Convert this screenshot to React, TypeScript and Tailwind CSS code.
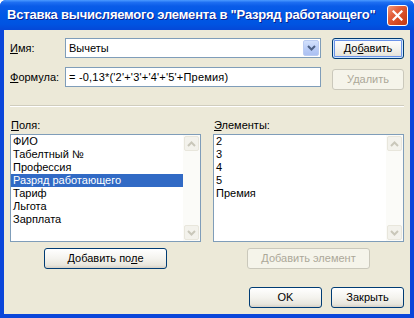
import React from "react";

function Chevron({ dir, color }: { dir: "up" | "down"; color: string }) {
  return (
    <svg width="9" height="6" viewBox="0 0 9 6">
      {dir === "up" ? (
        <path d="M1 5 L4.5 1.5 L8 5" fill="none" stroke={color} strokeWidth="2" />
      ) : (
        <path d="M1 1 L4.5 4.5 L8 1" fill="none" stroke={color} strokeWidth="2" />
      )}
    </svg>
  );
}

function ScrollBtn({ dir }: { dir: "up" | "down" }) {
  return (
    <div className="w-[15px] h-[15px] rounded-[2px] border border-[#E8E6DC] bg-[#F3F2EC] flex items-center justify-center">
      <Chevron dir={dir} color="#C9C7BA" />
    </div>
  );
}

function ListBox({ items, selected, width }: { items: string[]; selected?: number; width: string }) {
  return (
    <div className={`${width} h-[108px] border border-[#7F9DB9] bg-white flex`}>
      <div className="flex-1 flex flex-col pt-[0px]">
        {items.map((it, i) => (
          <div
            key={i}
            className={`h-[13px] leading-[13px] pl-[2px] whitespace-nowrap ${
              i === selected ? "bg-[#316AC5] text-white" : "text-black"
            }`}
          >
            {it}
          </div>
        ))}
      </div>
      <div className="w-[17px] bg-[#FBFBF8] flex flex-col justify-between py-[1px] pl-[1px]">
        <ScrollBtn dir="up" />
        <ScrollBtn dir="down" />
      </div>
    </div>
  );
}

function Btn({
  children,
  width,
  disabled,
  isDefault,
  extra,
}: {
  children: React.ReactNode;
  width: string;
  disabled?: boolean;
  isDefault?: boolean;
  extra?: string;
}) {
  if (disabled) {
    return (
      <div
        className={`${width} h-[21px] rounded-[3px] border border-[#CAC8BB] bg-[#F5F4EA] text-[#ACA899] flex items-center justify-center ${extra ?? ""}`}
      >
        {children}
      </div>
    );
  }
  return (
    <div
      className={`${width} h-[21px] rounded-[3px] border border-[#003C74] bg-[linear-gradient(180deg,#FFFFFF_0%,#F4F3EE_50%,#E8E6DD_85%,#D6D0C5_100%)] text-black flex items-center justify-center ${
        isDefault ? "shadow-[inset_0_0_0_1px_#CEE7FF,inset_0_0_0_2px_#6B93E8]" : ""
      } ${extra ?? ""}`}
    >
      {children}
    </div>
  );
}

export default function App() {
  return (
    <div className="w-[414px] h-[318px] bg-[#0A46DA] flex flex-col rounded-t-[6px] overflow-hidden font-['Liberation_Sans',Tahoma,sans-serif] text-[11px] text-black">
      {/* Title bar */}
      <div className="h-[30px] shrink-0 flex items-center pl-[7px] pr-[6px] bg-[linear-gradient(180deg,#4C9BFF_0%,#1E6FF2_8%,#0A5CE8_20%,#0058E6_50%,#0054E2_80%,#0548D8_100%)]">
        <div className="flex-1 text-white font-bold text-[13px] whitespace-nowrap [text-shadow:1px_1px_#0A1F8E] tracking-[-0.2px]">
          Вставка вычисляемого элемента в "Разряд работающего"
        </div>
        <div className="w-[21px] h-[21px] rounded-[3px] border border-white bg-[linear-gradient(135deg,#F09A7C_0%,#E3603C_35%,#D2471F_70%,#C23A14_100%)] flex items-center justify-center">
          <svg width="11" height="11" viewBox="0 0 11 11">
            <path d="M1.5 1.5 L9.5 9.5 M9.5 1.5 L1.5 9.5" stroke="white" strokeWidth="2.2" strokeLinecap="square" />
          </svg>
        </div>
      </div>

      {/* Client area */}
      <div className="flex-1 mx-[4px] mb-[4px] bg-[#ECE9D8] flex flex-col pl-[6px] pr-[6px] pt-[8px]">
        {/* Row 1 */}
        <div className="flex items-start h-[21px]">
          <div className="w-[55px] h-[20px] flex items-center">
            <span>
              <span className="underline">И</span>мя:
            </span>
          </div>
          <div className="w-[256px] h-[20px] border border-[#7F9DB9] bg-white flex items-center">
            <div className="flex-1 pl-[3px]">Вычеты</div>
            <div className="w-[16px] h-[16px] mr-[1px] rounded-[2px] border border-[#BBCCF2] bg-[linear-gradient(180deg,#D3E1FC_0%,#B8CBF6_60%,#ABC0F2_100%)] flex items-center justify-center">
              <Chevron dir="down" color="#4D6185" />
            </div>
          </div>
          <Btn width="w-[72px]" isDefault extra="ml-[11px]">
            <span>
              До<span className="underline">б</span>авить
            </span>
          </Btn>
        </div>

        {/* Row 2 */}
        <div className="flex items-start mt-[8px] h-[23px]">
          <div className="w-[55px] h-[20px] flex items-center">
            <span>
              <span className="underline">Ф</span>ормула:
            </span>
          </div>
          <div className="w-[256px] h-[20px] border border-[#7F9DB9] bg-white flex items-center pl-[3px] whitespace-nowrap tracking-[0.2px]">
            = -0,13*('2'+'3'+'4'+'5'+Премия)
          </div>
          <Btn width="w-[72px]" disabled extra="ml-[11px] mt-[2px]">
            Удалить
          </Btn>
        </div>

        {/* Separator */}
        <div className="mt-[15px] border-t border-[#D0CDBE] border-b border-b-white" />

        {/* Lists */}
        <div className="flex mt-[12px]">
          <div className="flex flex-col w-[191px]">
            <div className="h-[15px] pl-[1px] leading-[12px]">
              <span className="underline">П</span>оля:
            </div>
            <ListBox
              width="w-[191px]"
              selected={3}
              items={["ФИО", "Табелтный №", "Профессия", "Разряд работающего", "Тариф", "Льгота", "Зарплата"]}
            />
            <div className="flex justify-center mt-[6px]">
              <Btn width="w-[123px]">
                <span>
                  Добавить по<span className="underline">л</span>е
                </span>
              </Btn>
            </div>
          </div>
          <div className="flex flex-col w-[191px] ml-[12px]">
            <div className="h-[15px] pl-[1px] leading-[12px]">
              <span className="underline">Э</span>лементы:
            </div>
            <ListBox width="w-[191px]" items={["2", "3", "4", "5", "Премия"]} />
            <div className="flex justify-center mt-[6px]">
              <Btn width="w-[123px]" disabled>
                Добавить элемент
              </Btn>
            </div>
          </div>
        </div>

        {/* Bottom buttons */}
        <div className="flex justify-end mt-[18px] gap-[9px]">
          <Btn width="w-[73px]">OK</Btn>
          <Btn width="w-[73px]">Закрыть</Btn>
        </div>
      </div>
    </div>
  );
}
